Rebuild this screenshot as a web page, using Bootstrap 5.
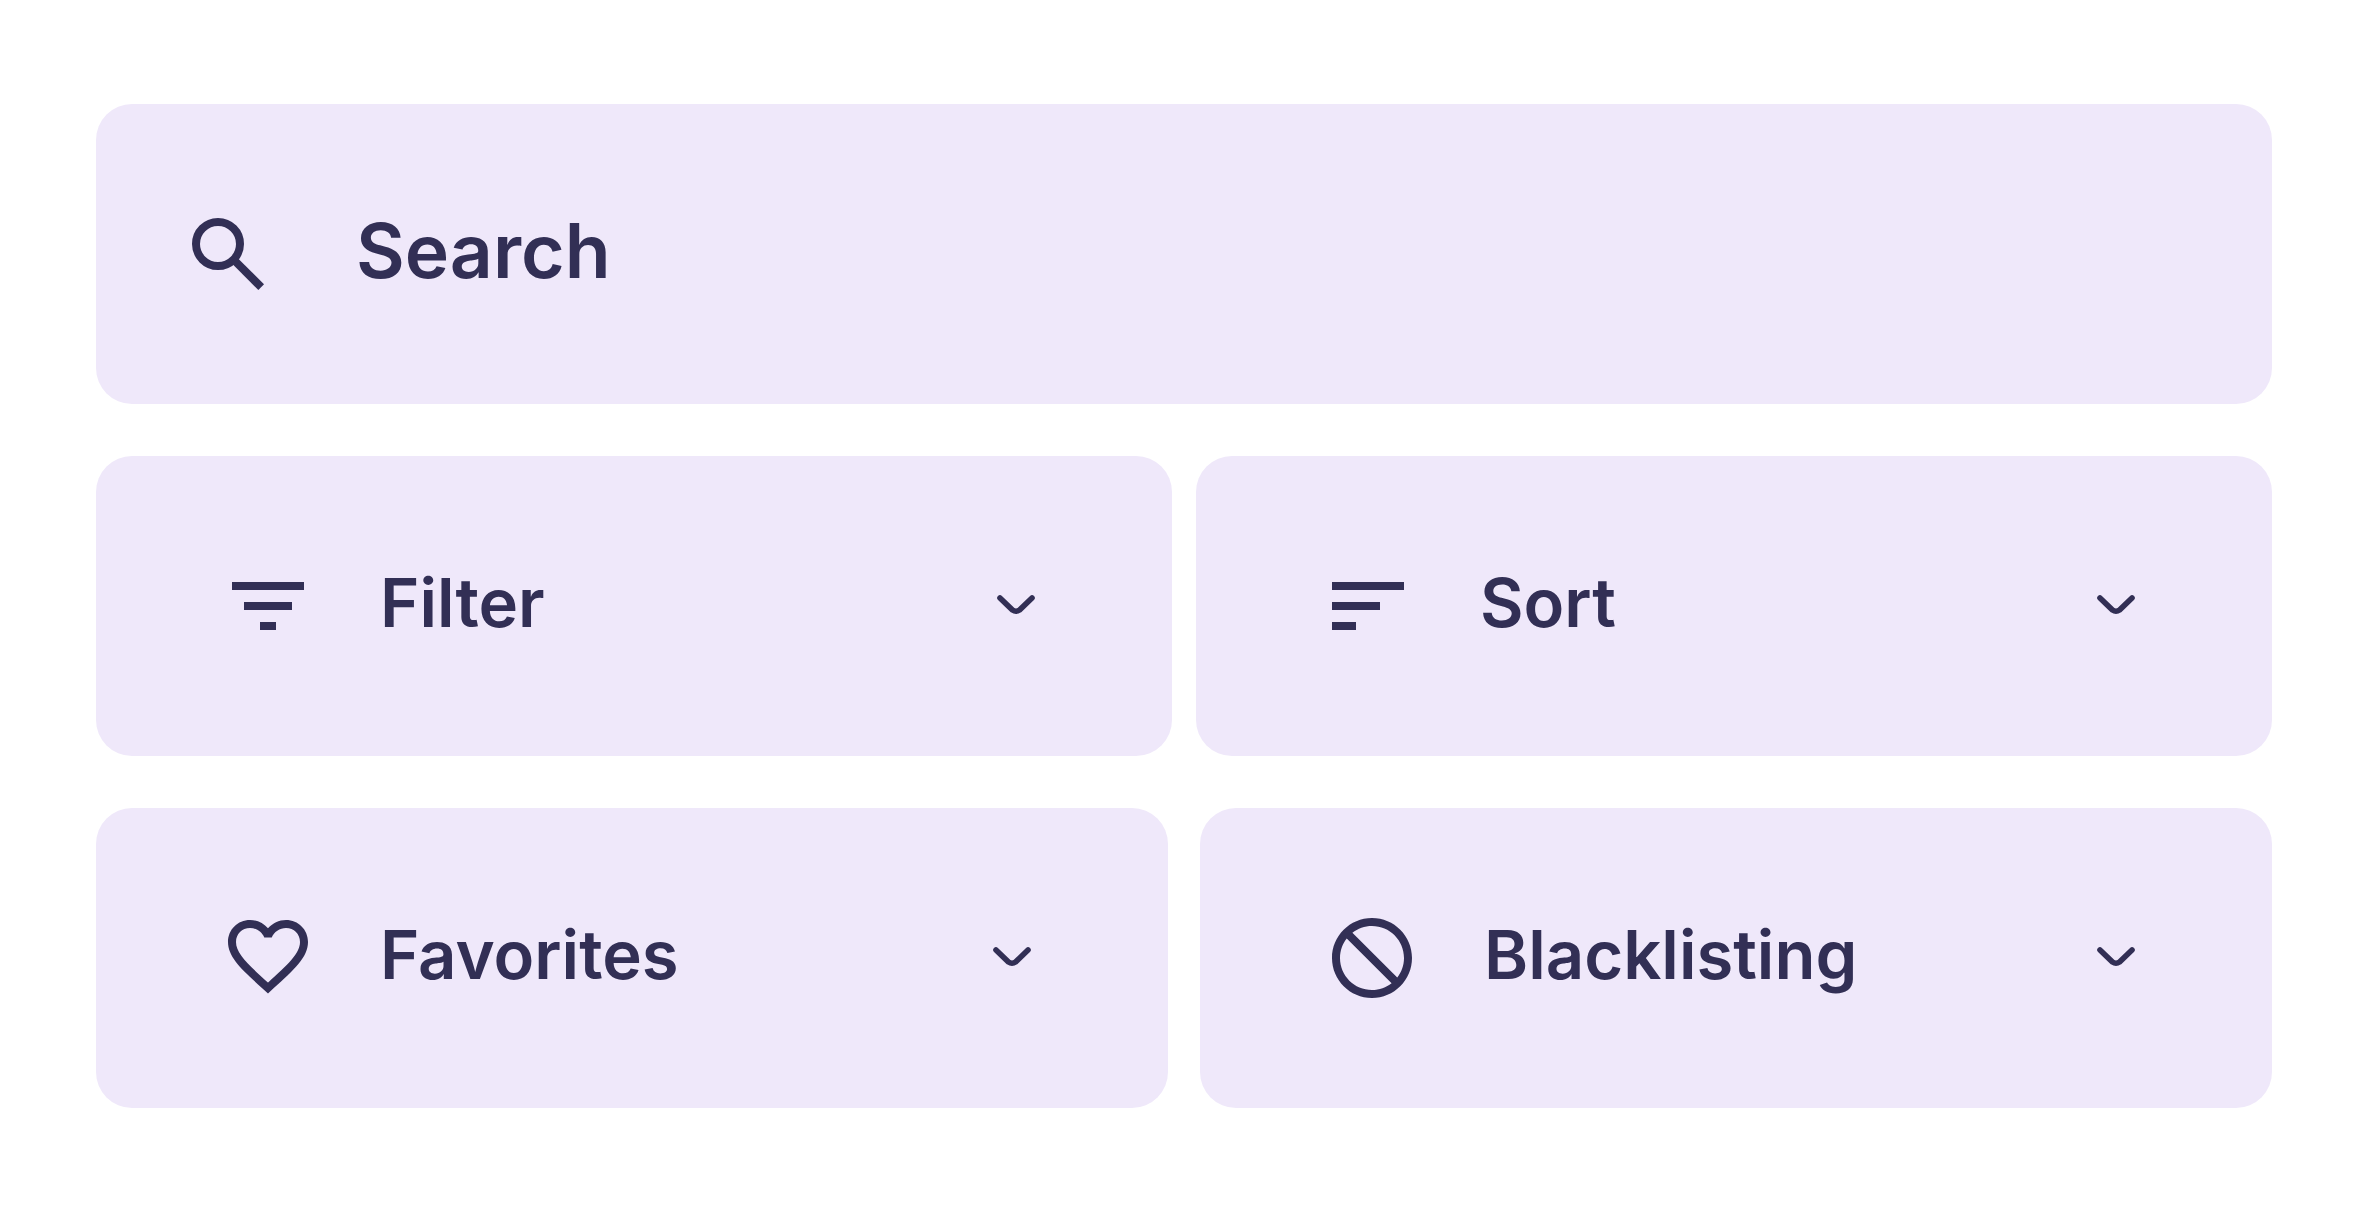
<!DOCTYPE html>
<html lang="en">
<head>
<meta charset="utf-8">
<meta name="viewport" content="width=device-width, initial-scale=1">
<title>Search and filters</title>
<link href="https://cdn.jsdelivr.net/npm/bootstrap@5.3.0/dist/css/bootstrap.min.css" rel="stylesheet">
<style>
  body { font-family: Inter, "Liberation Sans", sans-serif; font-weight: 600; color: #322f55; background: #fff; }
  .toolbar { padding: 104px 96px; gap: 52px; }
  .tile { height: 300px; border-radius: 36px; background: #efe8fa; color: #322f55; }
  .search-tile { padding: 0 84px; gap: 80px; }
  .search-field, .search-field:focus { font-size: 75px; line-height: 96px; font-weight: 600; color: #322f55; }
  .search-field::placeholder { color: #322f55; opacity: 1; }
  .menu-tile { flex: 1 1 0; min-width: 0; padding: 0 124px; gap: 64px; border: 0; font-size: 67px; line-height: 96px; font-weight: 600; }
  .search-field, .tile-label { padding: 0 0 6px; }
  .gap-narrow { gap: 24px; }
  .gap-wide { gap: 32px; }
  .glyph { width: 96px; height: 96px; fill: currentColor; }
  .lens { fill: none; stroke: currentColor; stroke-width: 8; }
  .chevron { width: 64px; height: 64px; fill: none; stroke: currentColor; stroke-width: 5.6; stroke-linecap: round; }
</style>
</head>
<body>
<main class="toolbar d-flex flex-column">
  <form class="tile search-tile d-flex align-items-center" role="search">
    <label for="search" class="d-flex flex-shrink-0" aria-label="Search">
      <svg class="glyph lens" viewBox="0 0 96 96" aria-hidden="true"><circle cx="38" cy="38" r="22"/><path d="M53.500 53.500L81.200 81.200"/></svg>
    </label>
    <input id="search" type="text" class="search-field form-control border-0 bg-transparent shadow-none" placeholder="Search">
  </form>

  <div class="d-flex gap-narrow">
    <button type="button" class="tile menu-tile d-flex align-items-center">
      <svg class="glyph flex-shrink-0" viewBox="0 0 24 24" aria-hidden="true"><path d="M10 18h4v-2h-4v2zM3 6v2h18V6H3zm3 7h12v-2H6v2z"/></svg>
      <span class="tile-label">Filter</span>
      <svg class="chevron ms-auto flex-shrink-0" viewBox="0 0 64 64" aria-hidden="true"><path d="M16 24L28.500 36Q32 38.500 35.500 36L48 24"/></svg>
    </button>
    <button type="button" class="tile menu-tile d-flex align-items-center">
      <svg class="glyph flex-shrink-0" viewBox="0 0 24 24" aria-hidden="true"><path d="M3 18h6v-2H3v2zM3 6v2h18V6H3zm0 7h12v-2H3v2z"/></svg>
      <span class="tile-label">Sort</span>
      <svg class="chevron ms-auto flex-shrink-0" viewBox="0 0 64 64" aria-hidden="true"><path d="M16 24L28.500 36Q32 38.500 35.500 36L48 24"/></svg>
    </button>
  </div>

  <div class="d-flex gap-wide">
    <button type="button" class="tile menu-tile d-flex align-items-center">
      <svg class="glyph flex-shrink-0" viewBox="0 0.5 24 24" aria-hidden="true"><path d="M16.5 3c-1.740 0-3.410.810-4.500 2.090C10.910 3.810 9.240 3 7.500 3 4.420 3 2 5.420 2 8.500c0 3.780 3.400 6.860 8.550 11.540L12 21.350l1.450-1.320C18.600 15.360 22 12.280 22 8.500 22 5.420 19.580 3 16.500 3zm-4.400 15.550l-.1.1-.1-.1C7.140 14.240 4 11.390 4 8.500 4 6.500 5.500 5 7.500 5c1.540 0 3.040.990 3.570 2.360h1.870C13.460 5.990 14.960 5 16.500 5c2 0 3.500 1.500 3.500 3.500 0 2.890-3.140 5.740-7.900 10.050z"/></svg>
      <span class="tile-label">Favorites</span>
      <svg class="chevron ms-auto flex-shrink-0" viewBox="0 0 64 64" aria-hidden="true"><path d="M16 24L28.500 36Q32 38.500 35.500 36L48 24"/></svg>
    </button>
    <button type="button" class="tile menu-tile d-flex align-items-center">
      <svg class="glyph flex-shrink-0" viewBox="0 0 24 24" aria-hidden="true"><path d="M12 2C6.480 2 2 6.480 2 12s4.480 10 10 10 10-4.480 10-10S17.520 2 12 2zm0 18c-4.420 0-8-3.580-8-8 0-1.850.630-3.550 1.690-4.900L16.900 18.310C15.550 19.370 13.850 20 12 20zm6.310-3.100L7.100 5.690C8.450 4.630 10.150 4 12 4c4.420 0 8 3.580 8 8 0 1.850-.630 3.550-1.690 4.900z"/></svg>
      <span class="tile-label">Blacklisting</span>
      <svg class="chevron ms-auto flex-shrink-0" viewBox="0 0 64 64" aria-hidden="true"><path d="M16 24L28.500 36Q32 38.500 35.500 36L48 24"/></svg>
    </button>
  </div>
</main>
<script src="https://cdn.jsdelivr.net/npm/bootstrap@5.3.0/dist/js/bootstrap.bundle.min.js"></script>
</body>
</html>
